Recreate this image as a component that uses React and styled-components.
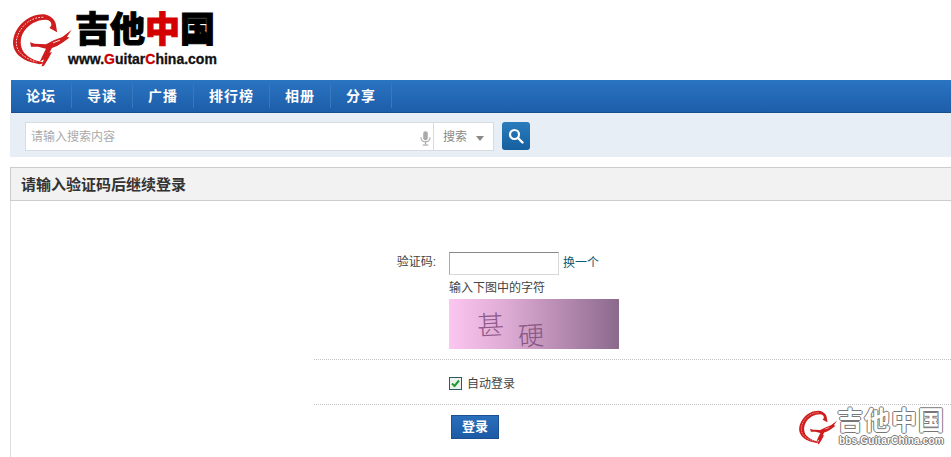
import React from "react";
import styled, { createGlobalStyle } from "styled-components";

const Global = createGlobalStyle`
  html, body { margin: 0; padding: 0; background: #fff; overflow: hidden; }
  body { font: 12px/1.5 "Liberation Sans", "Noto Sans CJK SC", sans-serif; color: #444; }
`;
const CJK = `"Liberation Sans", "Noto Sans CJK SC", sans-serif`;

const Page = styled.div`
  position: relative;
  width: 951px;
  height: 457px;
  overflow: hidden;
`;
const Header = styled.header`
  height: 80px;
  display: flex;
  align-items: flex-start;
  padding: 10px 0 0 5px;
  box-sizing: border-box;
`;
const LogoText = styled.div`
  display: flex;
  flex-direction: column;
  margin: 2px 0 0 -3px;
`;
const LogoCn = styled.div`
  font: 900 35px/36px ${CJK};
  color: #000;
  height: 35px;
  -webkit-text-stroke: 1px currentColor;
  span { color: #d40000; }
`;
const LogoUrl = styled.div`
  font: 700 14px/18px "Liberation Sans", sans-serif;
  color: #111;
  margin: 3px 0 0 -7px;
  white-space: nowrap;
  -webkit-text-stroke: 0.3px currentColor;
  span { color: #c80000; }
`;
const Nav = styled.nav`
  margin-left: 11px;
  height: 33px;
  display: flex;
  background: linear-gradient(#2a74c2, #1d5ea9);
  border-bottom: 1px solid #1a4f8e;
  box-sizing: border-box;
`;
const NavItem = styled.a`
  padding: 0 15px;
  margin: 4px 0;
  border-right: 1px solid #3a78bd;
  color: #fff;
  font: 700 14px/25px ${CJK};
  letter-spacing: 1px;
`;
const SearchBar = styled.div`
  margin-left: 10px;
  height: 44px;
  background: #e8eef5;
  display: flex;
  padding: 9px 0 0 15px;
  box-sizing: border-box;
`;
const SearchBox = styled.div`
  width: 469px;
  height: 29px;
  display: flex;
  background: #fff;
  border: 1px solid #d5dde2;
  box-sizing: border-box;
`;
const SearchInput = styled.div`
  flex: 1;
  padding: 1px 0 0 5px;
  color: #aaa;
  font: 12px/26px ${CJK};
  display: flex;
  justify-content: space-between;
  align-items: center;
  border-right: 1px solid #d5dde2;
`;
const Mic = styled.svg`
  width: 11px;
  height: 15px;
  margin-right: 2px;
  margin-top: 2px;
`;
const SearchType = styled.div`
  width: 59px;
  color: #888;
  font: 12px/26px ${CJK};
  display: flex;
  align-items: center;
  padding: 1px 0 0 9px;
  box-sizing: border-box;
`;
const Caret = styled.i`
  margin-left: 9px;
  margin-top: 2px;
  border: 4px solid transparent;
  border-top: 5px solid #888;
  border-bottom: 0;
`;
const SearchButton = styled.button`
  margin-left: 8px;
  width: 28px;
  height: 28px;
  padding: 0;
  border: 0;
  border-radius: 3px;
  background: linear-gradient(#2b7cbd, #155f9e);
  display: flex;
  align-items: center;
  justify-content: center;
`;
const Panel = styled.section`
  margin: 10px 0 0 10px;
  border-left: 1px solid #ddd;
  height: 290px;
`;
const PanelTitle = styled.h1`
  margin: 0 0 0 -1px;
  height: 34px;
  background: #f2f2f2;
  border: 1px solid #ccc;
  border-right: 0;
  box-sizing: border-box;
  padding-left: 10px;
  font: 700 15px/33px ${CJK};
  color: #333;
`;
const Form = styled.form`
  padding: 51px 0 0 303px;
  display: flex;
  flex-direction: column;
`;
const Row = styled.div`
  display: grid;
  grid-template-columns: 122px 1fr;
  column-gap: 13px;
`;
const Label = styled.label`
  text-align: right;
  font: 12px/20px ${CJK};
  color: #444;
`;
const Line = styled.div`
  display: flex;
  align-items: center;
  gap: 4px;
`;
const TextInput = styled.div`
  width: 110px;
  height: 23px;
  box-sizing: border-box;
  border: 1px solid #d8d8d8;
  border-top-color: #888;
  border-left-color: #aaa;
`;
const Swap = styled.a`
  color: #0f5a70;
  font: 12px/20px ${CJK};
  margin-top: -1px;
`;
const Hint = styled.div`
  margin-top: 3px;
  font: 12px/21px ${CJK};
  color: #444;
`;
const Captcha = styled.div`
  width: 170px;
  height: 50px;
  overflow: hidden;
  display: flex;
  background: linear-gradient(90deg, #fbc6f0, #dcaad2 35%, #b88cb4 65%, #8b6a8c);
`;
const CaptchaChar = styled.span`
  font: 300 ${(p) => p.$size}px/1 "Noto Sans CJK SC", sans-serif;
  color: ${(p) => p.$color};
  margin: ${(p) => p.$top}px 0 0 ${(p) => p.$left}px;
  transform: rotate(${(p) => p.$rot}deg);
  height: ${(p) => p.$size}px;
`;
const Dotted = styled.div`
  border-top: 1px dotted #c4c4c4;
`;
const CaptchaRow = styled(Row)`
  padding-bottom: 10px;
`;
const CheckRow = styled.div`
  height: 44px;
  padding-left: 135px;
  display: flex;
  align-items: center;
  gap: 5px;
  font: 12px/20px ${CJK};
  color: #444;
  padding-top: 3px;
  box-sizing: border-box;
`;
const Check = styled.span`
  width: 11px;
  height: 11px;
  border: 1px solid #2d5a66;
  background: #eef2ee;
  display: flex;
  align-items: center;
  justify-content: center;
`;
const SubmitRow = styled.div`
  padding: 10px 0 0 137px;
`;
const Submit = styled.button`
  width: 48px;
  height: 24px;
  padding: 0;
  border: 1px solid #1b4f8f;
  background: linear-gradient(#2a6fbb, #1c5ba6);
  color: #fff;
  font: 700 13px/20px ${CJK};
`;
const Watermark = styled.div`
  position: absolute;
  right: 6px;
  bottom: 10px;
  display: flex;
  align-items: center;
`;
const MarkText = styled.div`
  display: flex;
  flex-direction: column;
  margin-left: -4px;
  text-shadow: 1px 0 #777, -1px 0 #777, 0 1px #777, 0 -1px #777;
  color: #fff;
`;
const MarkCn = styled.div`
  font: 700 26px/26px ${CJK};
  letter-spacing: 1px;
`;
const MarkUrl = styled.div`
  font: 700 10px/12px "Liberation Sans", sans-serif;
  letter-spacing: 0.2px;
  margin: 1px 0 0 2px;
`;

const Dragon = ({ width }) => (
  <svg width={width} height={(width * 170) / 210} viewBox="0 0 210 180" preserveAspectRatio="none">
    <g fill="#cf1c1c">
      <path d="M112 13 C85 12 60 25 42 48 C24 72 18 100 28 122 C38 145 65 160 100 165 L118 160 C95 158 70 148 55 130 C42 112 42 85 55 65 C68 45 90 30 118 30 C128 31 135 38 133 48 L128 55 L150 68 L146 42 C143 28 130 16 112 13 Z" />
      <path d="M72 98 L85 103 L118 104 L140 92 L165 82 L192 60 L178 82 L186 84 L165 100 L150 110 L135 116 L128 130 L135 128 L125 148 L112 170 L105 172 L112 150 L100 158 L110 135 L118 118 L95 112 L75 112 Z" />
    </g>
    <path d="M110 22 C85 22 65 33 50 53 C33 76 28 100 37 120 C45 137 65 150 90 158" fill="none" stroke="#fff" strokeWidth="2.5" strokeDasharray="5 4" />
    <path d="M138 100 L158 92" stroke="#fff" strokeWidth="2.5" />
  </svg>
);

const navItems = ["论坛", "导读", "广播", "排行榜", "相册", "分享"];

export default function App() {
  return (
    <Page>
      <Global />
      <Header>
        <Dragon width={73} />
        <LogoText>
          <LogoCn>吉他<span>中</span>国</LogoCn>
          <LogoUrl>www.<span>G</span>uitar<span>C</span>hina.com</LogoUrl>
        </LogoText>
      </Header>
      <Nav>
        {navItems.map((n) => <NavItem key={n}>{n}</NavItem>)}
      </Nav>
      <SearchBar>
        <SearchBox>
          <SearchInput>
            请输入搜索内容
            <Mic viewBox="0 0 12 16">
              <rect x="3.5" y="0" width="5" height="10" rx="2.5" fill="#aaa" />
              <path d="M1 6.5 C1 10 3 11.5 6 11.5 C9 11.5 11 10 11 6.5" fill="none" stroke="#aaa" strokeWidth="1.2" />
              <rect x="5.3" y="11.5" width="1.4" height="3" fill="#aaa" />
              <rect x="3" y="14.5" width="6" height="1.3" fill="#aaa" />
            </Mic>
          </SearchInput>
          <SearchType>搜索<Caret /></SearchType>
        </SearchBox>
        <SearchButton type="button" aria-label="搜索">
          <svg width="16" height="16" viewBox="0 0 16 16">
            <circle cx="6.5" cy="6.5" r="4.5" fill="none" stroke="#fff" strokeWidth="2.2" />
            <path d="M10 10 L14.5 14.5" stroke="#fff" strokeWidth="2.4" strokeLinecap="round" />
          </svg>
        </SearchButton>
      </SearchBar>
      <Panel>
        <PanelTitle>请输入验证码后继续登录</PanelTitle>
        <Form>
          <CaptchaRow>
            <Label>验证码:</Label>
            <div>
              <Line>
                <TextInput />
                <Swap>换一个</Swap>
              </Line>
              <Hint>输入下图中的字符</Hint>
              <Captcha>
                <CaptchaChar $size={27} $top={11} $left={28} $rot={-3} $color="#8f5a8a">甚</CaptchaChar>
                <CaptchaChar $size={26} $top={22} $left={14} $rot={-3} $color="#875684">硬</CaptchaChar>
              </Captcha>
            </div>
          </CaptchaRow>
          <Dotted />
          <CheckRow>
            <Check>
              <svg width="9" height="9" viewBox="0 0 9 9">
                <path d="M1 4.5 L3.5 7 L8 1.5" fill="none" stroke="#1e9a2e" strokeWidth="2" />
              </svg>
            </Check>
            自动登录
          </CheckRow>
          <Dotted />
          <SubmitRow>
            <Submit type="button">登录</Submit>
          </SubmitRow>
        </Form>
      </Panel>
      <Watermark>
        <Dragon width={47} />
        <MarkText>
          <MarkCn>吉他中国</MarkCn>
          <MarkUrl>bbs.GuitarChina.com</MarkUrl>
        </MarkText>
      </Watermark>
    </Page>
  );
}
